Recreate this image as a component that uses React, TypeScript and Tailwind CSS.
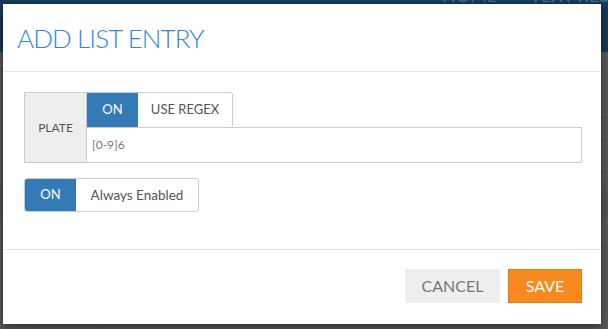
import React from "react";

const font = { fontFamily: "Lato, 'Open Sans', sans-serif" };

function Backdrop() {
  return (
    <div className="absolute inset-0 bg-[#595959]">
      <div className="h-[52px] bg-[#163b5a] relative">
        <div className="absolute left-[442px] top-[-14px] flex gap-[33px] text-[18px] leading-none text-[#4d6e8c] whitespace-nowrap">
          <span>HOME</span>
          <span>TEXT RESULTS</span>
        </div>
      </div>
      <div className="border-b border-[#4c4c4c] h-[66px]" />
      <div className="border-b border-[#4c4c4c] h-[22px]" />
      <div className="border-b border-[#4c4c4c] h-[33px]" />
      <div className="h-[12px]" />
      <div className="bg-[#545454] h-[36px]" />
      <div className="border-b border-[#4c4c4c] h-[26px]" />
      <div className="flex h-[80px]">
        <div className="w-[35px] border-r border-[#4c4c4c]" />
        <div className="w-[65px] border-r border-[#4c4c4c]" />
      </div>
    </div>
  );
}

export default function App() {
  return (
    <div className="relative w-[608px] h-[329px] overflow-hidden" style={font}>
      <Backdrop />
      <div className="absolute left-[3px] top-[4px] w-[598px] h-[320px] bg-white shadow-[0_3px_9px_rgba(0,0,0,0.5)] flex flex-col">
        <div className="h-[68px] border-b border-[#e5e5e5] px-[14px] flex items-center">
          <h4 className="text-[26px] font-light text-[#2c8bd6] tracking-[-0.9px] leading-none">
            ADD LIST ENTRY
          </h4>
        </div>
        <div className="h-[177px] pt-[20px] px-[21px]">
          <div className="flex w-[558px]">
            <div className="w-[63px] h-[71px] bg-[#eeeeee] border border-[#cccccc] flex items-center justify-center text-[12px] text-[#555]">
              PLATE
            </div>
            <div className="flex-1 flex flex-col -ml-px">
              <div className="flex h-[35px] items-start">
                <div className="flex h-[36px] border border-[#cccccc] rounded-r-[3px] overflow-hidden">
                  <div className="w-[51px] bg-[#337ab7] text-white text-[13px] flex items-center justify-center">
                    ON
                  </div>
                  <div className="w-[94px] bg-white text-[#555] text-[13px] flex items-center justify-center">
                    USE REGEX
                  </div>
                </div>
              </div>
              <div className="h-[36px] border border-[#cccccc] flex items-center px-[5px] text-[12px] text-[#777]">
                [0-9]6
              </div>
            </div>
          </div>
          <div className="mt-[15px] flex w-[175px] h-[34px] border border-[#cccccc] rounded-[3px] overflow-hidden">
            <div className="w-[51px] bg-[#337ab7] text-white text-[13px] flex items-center justify-center">
              ON
            </div>
            <div className="flex-1 text-[#555] text-[13.5px] flex items-center justify-center">
              Always Enabled
            </div>
          </div>
        </div>
        <div className="border-t border-[#e5e5e5] flex-1 flex justify-end items-start pt-[19px] pr-[19px] gap-[8px]">
          <button className="w-[95px] h-[34px] bg-[#eeeeee] text-[#777] text-[16px]">
            CANCEL
          </button>
          <button className="w-[74px] h-[34px] bg-[#f78a1e] border border-[#e57a12] text-white text-[16px]">
            SAVE
          </button>
        </div>
      </div>
    </div>
  );
}
